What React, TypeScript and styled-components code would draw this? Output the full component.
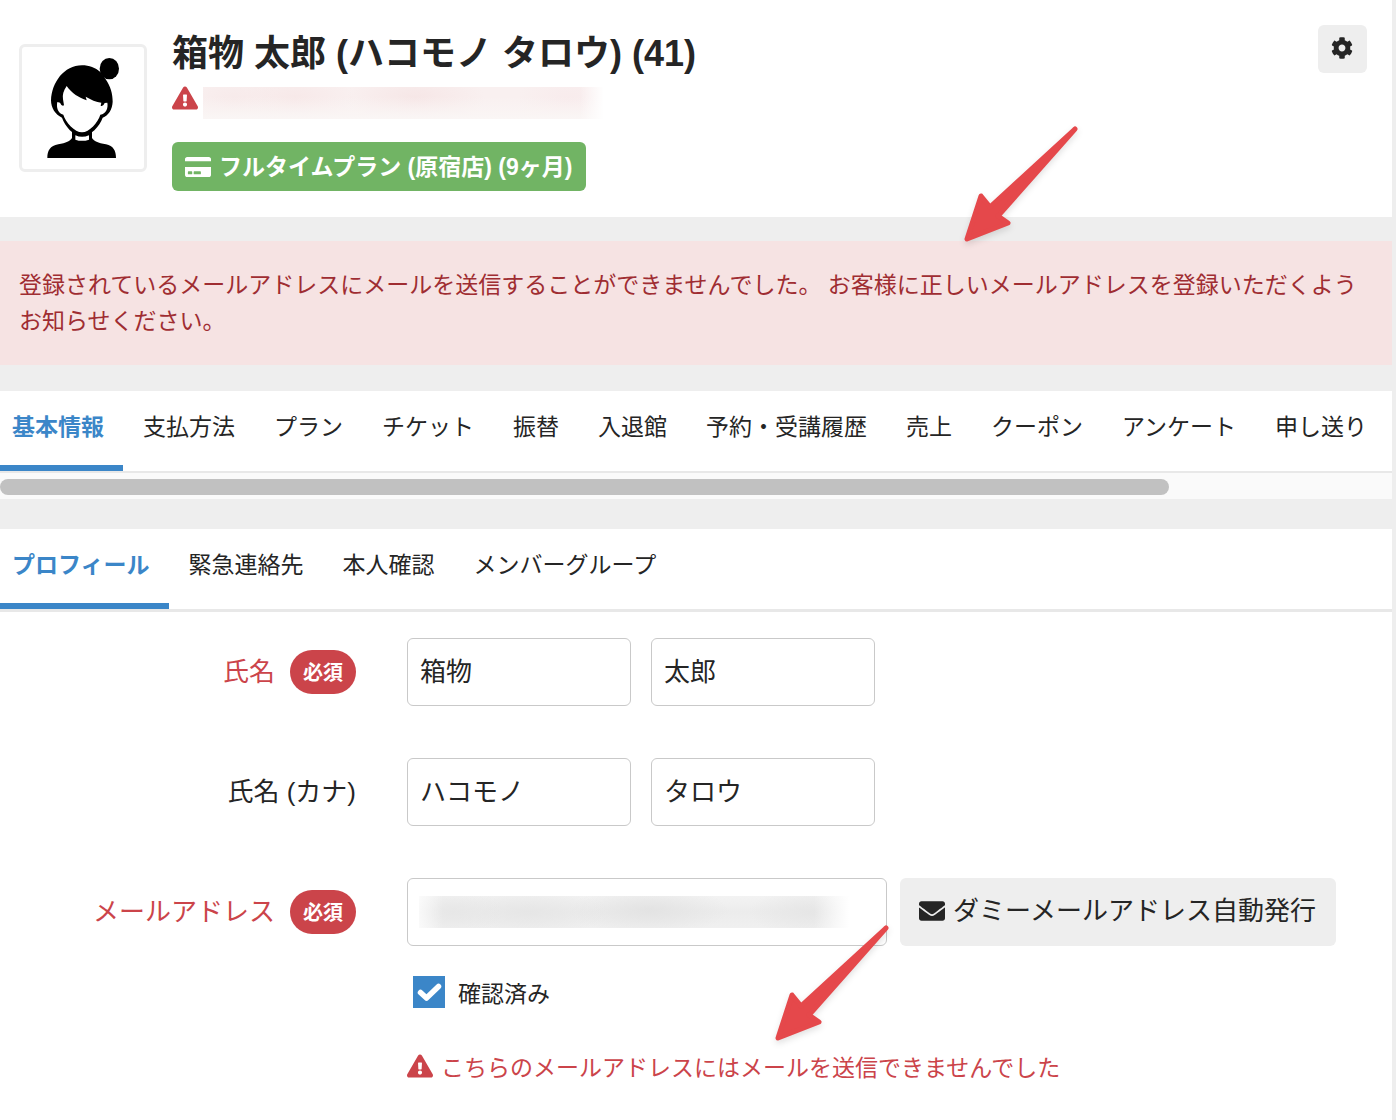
import React from "react";
import styled, { createGlobalStyle, css } from "styled-components";
import {
  FaCog,
  FaCreditCard,
  FaEnvelope,
  FaExclamationTriangle,
} from "react-icons/fa";

const color = {
  text: "#252525",
  blue: "#3b86c8",
  red: "#cb444a",
  green: "#71b464",
  grey: "#eeeeee",
  line: "#e8e8e8",
  arrow: "#e5484b",
};

const font = {
  base: `"Liberation Sans", "Noto Sans CJK JP", sans-serif`,
  japanese: `"Noto Sans CJK JP", sans-serif`,
};

const GlobalStyle = createGlobalStyle`
  *, *::before, *::after { box-sizing: border-box; }
  body {
    margin: 0;
    background: ${color.grey};
    color: ${color.text};
    font-family: ${font.base};
    font-size: 23px;
    line-height: 36px;
  }
  button, input { font: inherit; color: inherit; }
`;

const Page = styled.div`
  min-height: 100vh;
  padding-right: 4px;
  display: flex;
  flex-direction: column;
`;

const Header = styled.header`
  position: relative;
  display: flex;
  align-items: flex-start;
  gap: 25px;
  padding: 25px 25px 26px 19px;
  background: #fff;
`;

const Avatar = styled.div`
  flex: none;
  width: 128px;
  height: 128px;
  margin-top: 19px;
  border: 3px solid ${color.grey};
  border-radius: 6px;
  svg { display: block; width: 100%; height: 100%; }
`;

const Identity = styled.div`
  flex: 1;
  min-width: 0;
  display: flex;
  flex-direction: column;
  align-items: flex-start;
`;

const Name = styled.h1`
  margin: 0;
  font-size: 36px;
  line-height: 58px;
  font-weight: 700;
`;

const MailLine = styled.div`
  display: flex;
  align-items: flex-start;
  gap: 5px;
  height: 32px;
  margin: 4px 0 23px;
  color: ${color.red};
  font-size: 26px;
  svg { display: block; margin-top: -2px; }
`;

const MaskedMail = styled.span`
  width: 401px;
  height: 32px;
  background:
    linear-gradient(90deg, transparent 94%, #fff 100%),
    linear-gradient(180deg, rgba(250, 247, 246, 0) 30%, #faf6f5 100%),
    radial-gradient(ellipse 50px 30px at 8% 40%, #f7eaea, transparent),
    radial-gradient(ellipse 60px 30px at 23% 40%, #f7e8e8, transparent),
    radial-gradient(ellipse 70px 30px at 53% 35%, #f6e6e6, transparent),
    radial-gradient(ellipse 50px 30px at 91% 40%, #f8ebec, transparent),
    #f9f0f0;
`;

const PlanBadge = styled.span`
  display: inline-flex;
  align-items: center;
  gap: 8px;
  height: 49px;
  padding: 0 14px 0 13px;
  border-radius: 6px;
  background: ${color.green};
  color: #fff;
  font-weight: 700;
  svg { flex: none; font-size: 26px; }
`;

const SettingsButton = styled.button`
  display: grid;
  place-items: center;
  width: 49px;
  height: 48px;
  padding: 0 1px 2px 0;
  border: 0;
  border-radius: 6px;
  background: ${color.grey};
  font-size: 22px;
`;

const ArrowSvg = styled.svg<{ $left: number; $bottom: number }>`
  position: absolute;
  left: ${(p) => p.$left}px;
  bottom: ${(p) => p.$bottom}px;
  width: 120px;
  height: 120px;
  overflow: visible;
  pointer-events: none;
  z-index: 1;
  filter: drop-shadow(0 3px 3px rgba(0, 0, 0, 0.12));
`;

const Alert = styled.p`
  margin: 24px 0 26px;
  padding: 26px 19px;
  background: #f6e3e3;
  color: #9f2d32;
`;

const Panel = styled.section`
  background: #fff;
`;

const TabPanel = styled(Panel)`
  margin-bottom: 30px;
`;

const TabBar = styled.nav<{ $line: number }>`
  display: flex;
  overflow: hidden;
  border-bottom: ${(p) => p.$line}px solid ${color.line};
`;

const Tab = styled.a<{ $active?: boolean }>`
  flex: none;
  height: 80px;
  padding: 18px 19px 0 20px;
  color: inherit;
  text-decoration: none;
  white-space: nowrap;
  &:first-child { padding-left: 12px; }
  ${(p) =>
    p.$active &&
    css`
      color: ${color.blue};
      font-weight: 700;
      border-bottom: 6px solid ${color.blue};
    `}
`;

const ScrollTrack = styled.div`
  padding: 6px 0 4px;
  background: #fafafa;
`;

const ScrollThumb = styled.div`
  width: 84%;
  height: 16px;
  border-radius: 8px;
  background: #c1c1c1;
`;

const FormPanel = styled(Panel)`
  flex: 1;
`;

const Form = styled.form`
  display: flex;
  flex-direction: column;
  gap: 52px;
  padding: 26px 20px 24px;
  font-size: 26px;
`;

const Row = styled.div`
  display: grid;
  grid-template-columns: 336px minmax(0, 1fr);
  column-gap: 51px;
  align-items: start;
`;

const Label = styled.label<{ $error?: boolean }>`
  display: flex;
  justify-content: flex-end;
  align-items: center;
  gap: 15px;
  height: 68px;
  color: ${(p) => (p.$error ? color.red : "inherit")};
`;

const Required = styled.span`
  height: 44px;
  padding: 0 13px;
  border-radius: 22px;
  background: ${color.red};
  color: #fff;
  font-family: ${font.japanese};
  font-size: 20px;
  line-height: 44px;
  font-weight: 700;
`;

const Fields = styled.div<{ $gap: number }>`
  display: flex;
  gap: ${(p) => p.$gap}px;
`;

const TextInput = styled.input<{ $width: number }>`
  width: ${(p) => p.$width}px;
  height: 68px;
  padding: 0 12px 6px;
  border: 1px solid #c9c9c9;
  border-radius: 6px;
  background: #fff;
  outline: none;
`;

const MaskedInput = styled(TextInput)`
  background:
    linear-gradient(90deg, rgba(255, 255, 255, 0.7) 0, transparent 24px, transparent 395px, #fff 430px) 11px 17px / 430px 32px no-repeat,
    radial-gradient(ellipse 50px 24px at 34px 50%, #e7e7e7, transparent) 11px 17px / 430px 32px no-repeat,
    radial-gradient(ellipse 80px 24px at 110px 50%, #e6e6e6, transparent) 11px 17px / 430px 32px no-repeat,
    radial-gradient(ellipse 80px 24px at 230px 45%, #e3e3e3, transparent) 11px 17px / 430px 32px no-repeat,
    radial-gradient(ellipse 60px 24px at 390px 50%, #e6e6e6, transparent) 11px 17px / 430px 32px no-repeat,
    linear-gradient(#f3f3f3, #ececec, #f0f0f0) 11px 17px / 430px 32px no-repeat,
    #fff;
`;

const IssueButton = styled.button`
  display: flex;
  align-items: center;
  gap: 8px;
  height: 68px;
  padding: 0 20px 2px 19px;
  border: 0;
  border-radius: 6px;
  background: ${color.grey};
  white-space: nowrap;
`;

const EmailBody = styled.div`
  position: relative;
  font-family: ${font.japanese};
  font-size: 23px;
`;

const EmailFields = styled(Fields)`
  font-family: ${font.base};
  font-size: 26px;
`;

const CheckLabel = styled.label`
  display: flex;
  align-items: center;
  gap: 13px;
  margin: 28px 0 0 6px;
`;

const CheckBox = styled.span`
  display: grid;
  > * { grid-area: 1 / 1; }
  svg { width: 32px; height: 32px; pointer-events: none; }
`;

const CheckInput = styled.input`
  appearance: none;
  width: 32px;
  height: 32px;
  margin: 0;
  border: 1px solid ${color.blue};
  &:checked { background: ${color.blue}; }
`;

const ErrorText = styled.p`
  display: flex;
  align-items: center;
  gap: 8px;
  margin: 38px 0 0;
  color: ${color.red};
  svg { flex: none; font-size: 26px; }
`;

const Arrow = ({ left, bottom }: { left: number; bottom: number }) => (
  <ArrowSvg viewBox="0 0 120 120" $left={left} $bottom={bottom} aria-hidden>
    <path
      d="M7 116 21 73 30 84 115 6 38 93 48 100Z"
      fill={color.arrow}
      stroke={color.arrow}
      strokeWidth="5"
      strokeLinejoin="round"
    />
  </ArrowSvg>
);

const CheckMark = () => (
  <svg viewBox="0 0 32 32" fill="none" aria-hidden>
    <path
      d="M7.5 16.5 13.5 22 25.5 10.5"
      stroke="#fff"
      strokeWidth="5.5"
      strokeLinecap="round"
      strokeLinejoin="round"
    />
  </svg>
);

const Portrait = () => (
  <svg viewBox="66 81 366 366" role="img" aria-label="プロフィール画像">
    <ellipse cx="328" cy="146" rx="29" ry="32" />
    <path d="M246 136C268 136 286 143 301 156L317 178C332 200 338 222 338 245C337 268 325 287 308 293C299 319 272 348 246 348C220 348 195 319 186 293C166 284 153 264 153 241C155 188 192 136 246 136Z" />
    <path d="M216 328H276V354C281 363 294 369 318 373C340 378 348 392 348 414H142C142 392 150 378 175 373C198 369 211 363 216 354Z" />
    <path
      fill="#fff"
      d="M226 346Q246 355 267 346V359Q246 366 226 359ZM200 198C190 212 187 224 189 238L192 256Q185 260 180 248L172 246C168 262 174 281 190 284C197 308 224 336 246 337C268 336 294 308 301 284C318 281 325 264 322 248L314 249Q309 261 302 257L304 248C289 246 272 239 257 230L260 241C238 234 214 219 200 198Z"
    />
  </svg>
);

const mainTabs = [
  "基本情報",
  "支払方法",
  "プラン",
  "チケット",
  "振替",
  "入退館",
  "予約・受講履歴",
  "売上",
  "クーポン",
  "アンケート",
  "申し送り",
];
const subTabs = ["プロフィール", "緊急連絡先", "本人確認", "メンバーグループ"];

const Tabs = ({ items, line, label }: { items: string[]; line: number; label: string }) => (
  <TabBar $line={line} aria-label={label}>
    {items.map((item, i) => (
      <Tab key={item} href="#" $active={i === 0} aria-current={i === 0 ? "page" : undefined}>
        {item}
      </Tab>
    ))}
  </TabBar>
);

export default function App() {
  return (
    <Page>
      <GlobalStyle />
      <Header>
        <Avatar>
          <Portrait />
        </Avatar>
        <Identity>
          <Name>箱物 太郎 (ハコモノ タロウ) (41)</Name>
          <MailLine>
            <FaExclamationTriangle />
            <MaskedMail />
          </MailLine>
          <PlanBadge>
            <FaCreditCard />
            フルタイムプラン (原宿店) (9ヶ月)
          </PlanBadge>
        </Identity>
        <SettingsButton type="button" aria-label="設定">
          <FaCog />
        </SettingsButton>
        <Arrow left={960} bottom={-26} />
      </Header>

      <Alert role="alert">
        登録されているメールアドレスにメールを送信することができませんでした。
        お客様に正しいメールアドレスを登録いただくようお知らせください。
      </Alert>

      <TabPanel>
        <Tabs items={mainTabs} line={2} label="会員メニュー" />
        <ScrollTrack>
          <ScrollThumb />
        </ScrollTrack>
      </TabPanel>

      <FormPanel>
        <Tabs items={subTabs} line={3} label="基本情報メニュー" />
        <Form>
          <Row>
            <Label htmlFor="last-name" $error>
              氏名
              <Required>必須</Required>
            </Label>
            <Fields $gap={20}>
              <TextInput id="last-name" $width={224} defaultValue="箱物" />
              <TextInput $width={224} aria-label="名" defaultValue="太郎" />
            </Fields>
          </Row>
          <Row>
            <Label htmlFor="last-kana">氏名 (カナ)</Label>
            <Fields $gap={20}>
              <TextInput id="last-kana" $width={224} defaultValue="ハコモノ" />
              <TextInput $width={224} aria-label="メイ" defaultValue="タロウ" />
            </Fields>
          </Row>
          <Row>
            <Label htmlFor="email" $error>
              メールアドレス
              <Required>必須</Required>
            </Label>
            <EmailBody>
              <EmailFields $gap={13}>
                <MaskedInput id="email" type="email" $width={480} />
                <IssueButton type="button">
                  <FaEnvelope />
                  ダミーメールアドレス自動発行
                </IssueButton>
              </EmailFields>
              <CheckLabel>
                <CheckBox>
                  <CheckInput type="checkbox" defaultChecked />
                  <CheckMark />
                </CheckBox>
                確認済み
              </CheckLabel>
              <ErrorText>
                <FaExclamationTriangle />
                こちらのメールアドレスにはメールを送信できませんでした
              </ErrorText>
              <Arrow left={364} bottom={42} />
            </EmailBody>
          </Row>
        </Form>
      </FormPanel>
    </Page>
  );
}
